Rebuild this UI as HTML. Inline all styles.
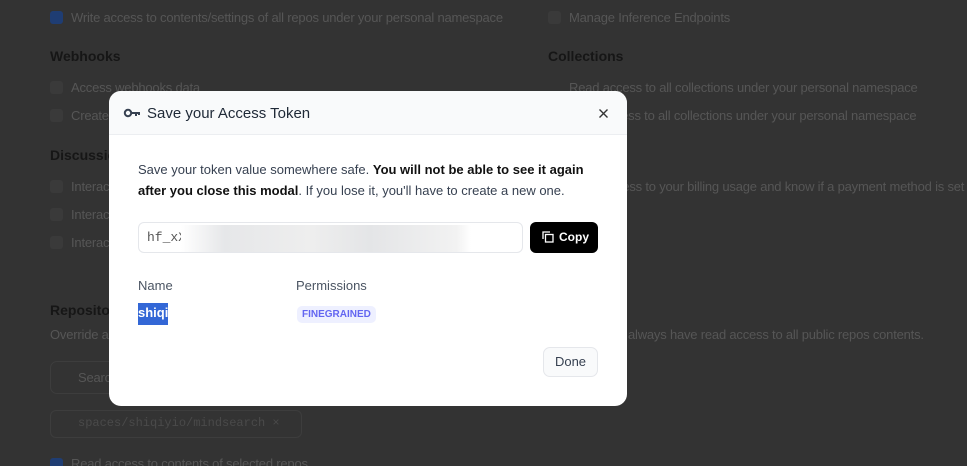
<!DOCTYPE html>
<html><head><meta charset="utf-8"><style>
*{box-sizing:border-box;margin:0;padding:0}
html,body{width:967px;height:466px;overflow:hidden}
body{background:#333;font-family:"Liberation Sans",sans-serif;position:relative}
.bg{position:absolute;font-size:13px;color:#565656;white-space:nowrap;letter-spacing:-0.2px}
.h{position:absolute;font-size:14px;font-weight:bold;color:#161616}
.cb{position:absolute;width:13px;height:13px;border-radius:3px;background:#3a3a3a}
.modal{position:absolute;left:109px;top:91px;width:518px;height:315px;background:#fff;border-radius:12px;overflow:hidden}
.hd{height:44px;background:#f9fafb;border-bottom:1px solid #eceef1;position:relative}
.hd .t{position:absolute;left:38px;top:14px;font-size:15px;color:#1f2937}
.p{position:absolute;left:29px;top:68px;width:450px;font-size:13px;line-height:21px;color:#374151}
.p b{color:#111}
.in{position:absolute;left:29px;top:131px;width:385px;height:31px;border:1px solid #e5e7eb;border-radius:6px;font-family:"Liberation Mono",monospace;font-size:13px;color:#555;padding:7px 8px;overflow:hidden}
.blur{position:absolute;left:42px;top:2px;width:290px;height:27px;background:linear-gradient(90deg,#fff,#e6e7e9 15%,#eee 45%,#e4e5e7 65%,#f2f2f2 95%,#fff)}
.copy{position:absolute;left:421px;top:131px;width:68px;height:31px;background:#000;border-radius:6px;color:#fff;font-size:12px;font-weight:bold;padding:8px 0 0 29px}
.lab{position:absolute;top:187px;font-size:13px;color:#4b5563}
.sel{position:absolute;left:29px;top:212px;background:#3367d6;color:#fff;font-weight:bold;font-size:13px;padding:2px 0;height:22px;width:30px}
.badge{position:absolute;left:188px;top:215px;background:#eef0ff;color:#6366f1;font-size:10px;font-weight:bold;padding:3px 5px;border-radius:5px}
.done{position:absolute;left:434px;top:256px;width:55px;height:30px;border:1px solid #e5e7eb;border-radius:7px;background:#f9fafb;font-size:13px;color:#374151;text-align:center;line-height:28px}
</style></head><body>
<div class="cb" style="left:50px;top:11px;background:#1f3d73"></div><div class="bg" style="left:71px;top:10px">Write access to contents/settings of all repos under your personal namespace</div>
<div class="cb" style="left:548px;top:11px"></div><div class="bg" style="left:569px;top:10px">Manage Inference Endpoints</div>
<div class="h" style="left:50px;top:48px">Webhooks</div><div class="h" style="left:548px;top:48px">Collections</div>
<div class="cb" style="left:50px;top:81px"></div><div class="bg" style="left:71px;top:80px">Access webhooks data</div>
<div class="cb" style="left:50px;top:109px"></div><div class="bg" style="left:71px;top:108px">Create</div>
<div class="bg" style="left:569px;top:80px">Read access to all collections under your personal namespace</div>
<div class="bg" style="left:569px;top:108px">Write access to all collections under your personal namespace</div>
<div class="h" style="left:50px;top:147px">Discussions</div>
<div class="cb" style="left:50px;top:180px"></div><div class="bg" style="left:71px;top:179px">Interact</div>
<div class="cb" style="left:50px;top:208px"></div><div class="bg" style="left:71px;top:207px">Interact</div>
<div class="cb" style="left:50px;top:236px"></div><div class="bg" style="left:71px;top:235px">Interact</div>
<div class="bg" style="left:569px;top:179px">Read access to your billing usage and know if a payment method is set</div>
<div class="h" style="left:50px;top:302px">Repositories</div>
<div class="bg" style="left:50px;top:327px">Override any permissions</div><div class="bg" style="left:628px;top:327px">always have read access to all public repos contents.</div>
<div style="position:absolute;left:50px;top:361px;width:200px;height:33px;border:1px solid #3d3d3d;border-radius:7px"></div><div class="bg" style="left:78px;top:370px">Search</div>
<div style="position:absolute;left:50px;top:410px;width:252px;height:28px;border:1px solid #3d3d3d;border-radius:6px"></div>
<div class="bg" style="left:78px;top:416px;font-family:'Liberation Mono',monospace;font-size:12px;color:#4a4a4a;letter-spacing:0">spaces/shiqiyio/mindsearch ×</div>
<div class="cb" style="left:50px;top:458px;background:#1f3d73"></div><div class="bg" style="left:71px;top:456px">Read access to contents of selected repos</div>
<div class="modal">
<div class="hd"><svg style="position:absolute;left:14px;top:17px" width="18" height="10" viewBox="0 0 18 10"><circle cx="5" cy="5" r="3.2" fill="none" stroke="#374151" stroke-width="2"/><path d="M8 5h9M13 5v3M16 5v2" stroke="#374151" stroke-width="2"/></svg><div class="t">Save your Access Token</div>
<svg style="position:absolute;left:490px;top:18px" width="9" height="9" viewBox="0 0 9 9"><path d="M0.5 0.5l8 8M8.5 0.5l-8 8" stroke="#333" stroke-width="1.4"/></svg></div>
<div class="p">Save your token value somewhere safe. <b>You will not be able to see it again after you close this modal</b>. If you lose it, you'll have to create a new one.</div>
<div class="in">hf_xX<div class="blur"></div></div>
<div class="copy"><svg style="position:absolute;left:12px;top:9px" width="12" height="12" viewBox="0 0 12 12"><path d="M1 8V1h7" fill="none" stroke="#fff" stroke-width="1.3"/><rect x="3.5" y="3.5" width="7.5" height="7.5" fill="none" stroke="#fff" stroke-width="1.3"/></svg>Copy</div>
<div class="lab" style="left:29px">Name</div><div class="lab" style="left:187px">Permissions</div>
<div class="sel">shiqi</div><div class="badge">FINEGRAINED</div>
<div class="done">Done</div>
</div>
</body></html>
